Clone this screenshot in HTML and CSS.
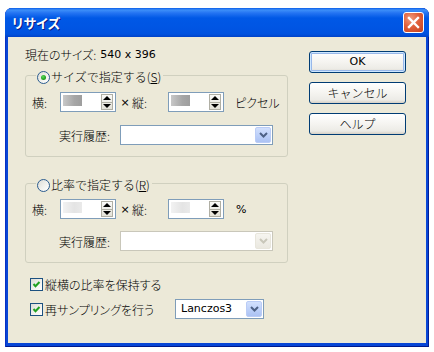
FILE: index.html
```html
<!DOCTYPE html>
<html lang="ja">
<head>
<meta charset="utf-8">
<title>リサイズ</title>
<link rel="stylesheet" href="styles.css">
</head>
<body>
<div class="window">
  <div class="titlebar">
    <span class="title">リサイズ</span>
    <span class="close"><svg width="13" height="13" viewBox="0 0 13 13"><path d="M2 2 L11 11 M11 2 L2 11" stroke="#fff" stroke-width="2.4" stroke-linecap="square"/></svg></span>
  </div>
  <div class="client">
    <div class="main">
      <div class="current"><span class="jp">現在のサイズ:</span><span class="num">540 x 396</span></div>

      <div class="group g1">
        <div class="legend"><span class="radio checked"></span><span class="jpw">サイズで指定する(<u>S</u>)</span></div>
        <div class="row">
          <span class="lbl jp">横:</span>
          <span class="spin"><span class="blur"></span><span class="spinbtn"><span class="half"><span class="up"></span></span><span class="half"><span class="down"></span></span></span></span>
          <span class="times">×</span>
          <span class="lbl2 jp">縦:</span>
          <span class="spin"><span class="blur"></span><span class="spinbtn"><span class="half"><span class="up"></span></span><span class="half"><span class="down"></span></span></span></span>
          <span class="unit jp">ピクセル</span>
        </div>
        <div class="row2">
          <span class="lbl3 jp">実行履歴:</span>
          <span class="combo"><span class="drop"><svg width="9" height="6" viewBox="0 0 9 6"><path d="M1 1 L4.5 4.5 L8 1" fill="none" stroke="#4D6185" stroke-width="2"/></svg></span></span>
        </div>
      </div>

      <div class="group g2">
        <div class="legend"><span class="radio"></span><span class="jpw">比率で指定する(<u>R</u>)</span></div>
        <div class="row">
          <span class="lbl jp">横:</span>
          <span class="spin"><span class="blur light"></span><span class="spinbtn"><span class="half"><span class="up"></span></span><span class="half"><span class="down"></span></span></span></span>
          <span class="times">×</span>
          <span class="lbl2 jp">縦:</span>
          <span class="spin"><span class="blur light"></span><span class="spinbtn"><span class="half"><span class="up"></span></span><span class="half"><span class="down"></span></span></span></span>
          <span class="unit pct">%</span>
        </div>
        <div class="row2">
          <span class="lbl3 jp">実行履歴:</span>
          <span class="combo disabled"><span class="drop"><svg width="9" height="6" viewBox="0 0 9 6"><path d="M1 1 L4.5 4.5 L8 1" fill="none" stroke="#C9C7BA" stroke-width="2"/></svg></span></span>
        </div>
      </div>

      <div class="checkrow c1">
        <span class="check"><svg width="11" height="11" viewBox="0 0 11 11"><path d="M2.5 5 L4.5 7.2 L8.5 3" fill="none" stroke="#21A121" stroke-width="2"/></svg></span>
        <span class="jp">縦横の比率を保持する</span>
      </div>
      <div class="checkrow c2">
        <span class="check"><svg width="11" height="11" viewBox="0 0 11 11"><path d="M2.5 5 L4.5 7.2 L8.5 3" fill="none" stroke="#21A121" stroke-width="2"/></svg></span>
        <span class="jp ctext">再サンプリングを行う</span>
        <span class="combo small"><span class="val">Lanczos3</span><span class="drop"><svg width="9" height="6" viewBox="0 0 9 6"><path d="M1 1 L4.5 4.5 L8 1" fill="none" stroke="#4D6185" stroke-width="2"/></svg></span></span>
      </div>
    </div>

    <div class="buttons">
      <button class="btn default"><span class="latin">OK</span></button>
      <button class="btn"><span class="jpw">キャンセル</span></button>
      <button class="btn"><span class="jpw">ヘルプ</span></button>
    </div>
  </div>
</div>
</body>
</html>
```

FILE: styles.css
```css
* { box-sizing: border-box; }
html, body { margin: 0; padding: 0; background: #fff; }
body {
  font-family: "Noto Sans CJK JP", "DejaVu Sans", sans-serif;
  font-size: 12px;
  color: #000;
}
.jp, .jpw {
  font-family: "Noto Sans CJK JP", sans-serif;
  font-size: 12px;
  font-weight: 300;
}
.jp { font-feature-settings: "palt"; }

.window {
  margin: 8px 0 0 5px;
  width: 424px;
  height: 339px;
  display: flex;
  flex-direction: column;
  border-radius: 7px 7px 0 0;
  overflow: hidden;
  background: #0846D6;
  box-shadow: inset 1px 0 0 #0831C4, inset -1px 0 0 #001C96, inset 0 -1px 0 #001A8C;
}
.titlebar {
  height: 29px;
  flex: none;
  display: flex;
  align-items: center;
  justify-content: space-between;
  padding: 0 5px 0 7px;
  background: linear-gradient(180deg, #0A5DE8 0px, #3D8FF9 2px, #2474F2 5px, #0058E6 10px, #0055E3 20px, #0052DF 26px, #0042C8 29px);
}
.title {
  color: #fff;
  font-weight: bold;
  font-size: 13px;
  line-height: 16px;
  font-feature-settings: "palt";
  text-shadow: 1px 1px 0 #0A1883;
  letter-spacing: 0.3px;
}
.close {
  width: 21px;
  height: 21px;
  border: 1px solid #fff;
  border-radius: 3px;
  background: radial-gradient(circle at 35% 30%, #F09B7E 0%, #E0603C 45%, #C5401C 100%);
  display: flex;
  align-items: center;
  justify-content: center;
}

.client {
  flex: 1;
  margin: 0 3px 4px;
  background: #ECE9D8;
  display: flex;
  padding: 10px 0 0 17px;
}
.main {
  width: 263px;
  display: flex;
  flex-direction: column;
}
.current {
  height: 16px;
  line-height: 16px;
  display: flex;
  align-items: center;
}
.num {
  font-family: "DejaVu Sans", sans-serif;
  font-size: 11px;
  margin-left: 4px;
}

.group {
  border: 1px solid #D0D0BF;
  border-radius: 3px;
  display: flex;
  flex-direction: column;
}
.g1 { margin-top: 12px; height: 82px; }
.g2 { margin-top: 26px; height: 80px; }
.legend {
  align-self: flex-start;
  margin: -7px 0 0 10px;
  height: 16px;
  line-height: 16px;
  display: flex;
  align-items: center;
  padding: 0 2px 0 1px;
  background: #ECE9D8;
}
.legend .jpw { margin-left: 1px; }
.radio {
  width: 13px;
  height: 13px;
  border-radius: 50%;
  border: 1px solid #2B5C8F;
  background: linear-gradient(135deg, #DCDCD6 0%, #F4F4F0 60%, #fff 100%);
  display: flex;
  align-items: center;
  justify-content: center;
}
.radio.checked::after {
  content: "";
  width: 5px;
  height: 5px;
  border-radius: 50%;
  background: radial-gradient(circle at 40% 35%, #5ADB5A 0%, #21A121 60%, #1A7F1A 100%);
}

.row {
  margin-top: 7px;
  height: 20px;
  display: flex;
  align-items: center;
  padding-left: 6px;
}
.g2 .row { margin-top: 6px; }
.lbl { width: 28px; }
.lbl2 { width: 36px; }
.times {
  width: 16px;
  text-align: center;
  font-family: "DejaVu Sans", sans-serif;
  font-size: 11px;
  padding-left: 2px;
}
.unit { margin-left: 11px; }
.pct {
  font-family: "DejaVu Sans", sans-serif;
  font-size: 11px;
  margin-left: 12px;
}
.spin {
  width: 56px;
  height: 20px;
  border: 1px solid #7F9DB9;
  background: #fff;
  display: flex;
  justify-content: space-between;
  padding: 1px 2px 1px 2px;
}
.blur {
  width: 19px;
  height: 11px;
  margin-top: 1px;
  background: linear-gradient(90deg, #C8C8C8 0%, #A6A6A6 60%, #9E9E9E 100%);
}
.blur.light {
  background: linear-gradient(90deg, #F2F2F2 0%, #E4E4E4 60%, #EAEAEA 100%);
}
.spinbtn {
  width: 12px;
  height: 16px;
  display: flex;
  flex-direction: column;
  border: 1px solid #B0AFA4;
  background: linear-gradient(180deg, #FAFAF8, #E4E2D8);
}
.half {
  flex: 1;
  display: flex;
  align-items: center;
  justify-content: center;
}
.half + .half { border-top: 1px solid #B0AFA4; }
.up {
  width: 0; height: 0;
  border-left: 4px solid transparent;
  border-right: 4px solid transparent;
  border-bottom: 4px solid #000;
}
.down {
  width: 0; height: 0;
  border-left: 4px solid transparent;
  border-right: 4px solid transparent;
  border-top: 4px solid #000;
}

.row2 {
  margin-top: 13px;
  height: 20px;
  display: flex;
  align-items: center;
  padding-left: 33px;
}
.g2 .row2 { margin-top: 12px; }
.lbl3 { width: 61px; }
.combo {
  width: 153px;
  height: 20px;
  border: 1px solid #7F9DB9;
  background: #fff;
  display: flex;
  justify-content: space-between;
  align-items: stretch;
  padding: 1px;
}
.combo .val {
  font-family: "DejaVu Sans", sans-serif;
  font-size: 11px;
  line-height: 16px;
  padding-left: 4px;
}
.drop {
  margin-left: auto;
  width: 16px;
  border: 1px solid #BACCF6;
  border-radius: 2px;
  background: linear-gradient(180deg, #D2E0FD 0%, #BACEF8 60%, #ACC2F3 100%);
  display: flex;
  align-items: center;
  justify-content: center;
}
.combo.disabled { border-color: #C9C7BA; }
.combo.disabled .drop {
  border-color: #E8E6DC;
  background: linear-gradient(180deg, #F6F5F0, #EAE8E0);
}
.combo.small { width: 89px; }
.ctext { width: 130px; }

.checkrow {
  display: flex;
  align-items: center;
  padding-left: 5px;
}
.c1 { margin-top: 13px; height: 16px; }
.c2 { margin-top: 7px; height: 20px; }
.check {
  width: 13px;
  height: 13px;
  border: 1px solid #1C5180;
  background: linear-gradient(135deg, #DCDCD6 0%, #F4F4F0 60%, #fff 100%);
  display: flex;
  align-items: center;
  justify-content: center;
  margin-right: 2px;
}

.buttons {
  margin-left: 21px;
  margin-top: 4px;
  display: flex;
  flex-direction: column;
  gap: 9px;
}
.btn {
  width: 97px;
  height: 22px;
  padding: 0;
  margin: 0;
  border: 1px solid #003C74;
  border-radius: 3px;
  background: linear-gradient(180deg, #FFFFFF 0%, #F5F4F0 50%, #ECEBE6 85%, #D6D0C5 100%);
  display: flex;
  align-items: center;
  justify-content: center;
  color: #000;
  line-height: 16px;
}
.btn.default {
  box-shadow: inset 0 0 0 1px #CEE7FF, inset 0 0 0 2px #98B8EA;
}
.latin { font-family: "DejaVu Sans", sans-serif; font-size: 11px; }
```
